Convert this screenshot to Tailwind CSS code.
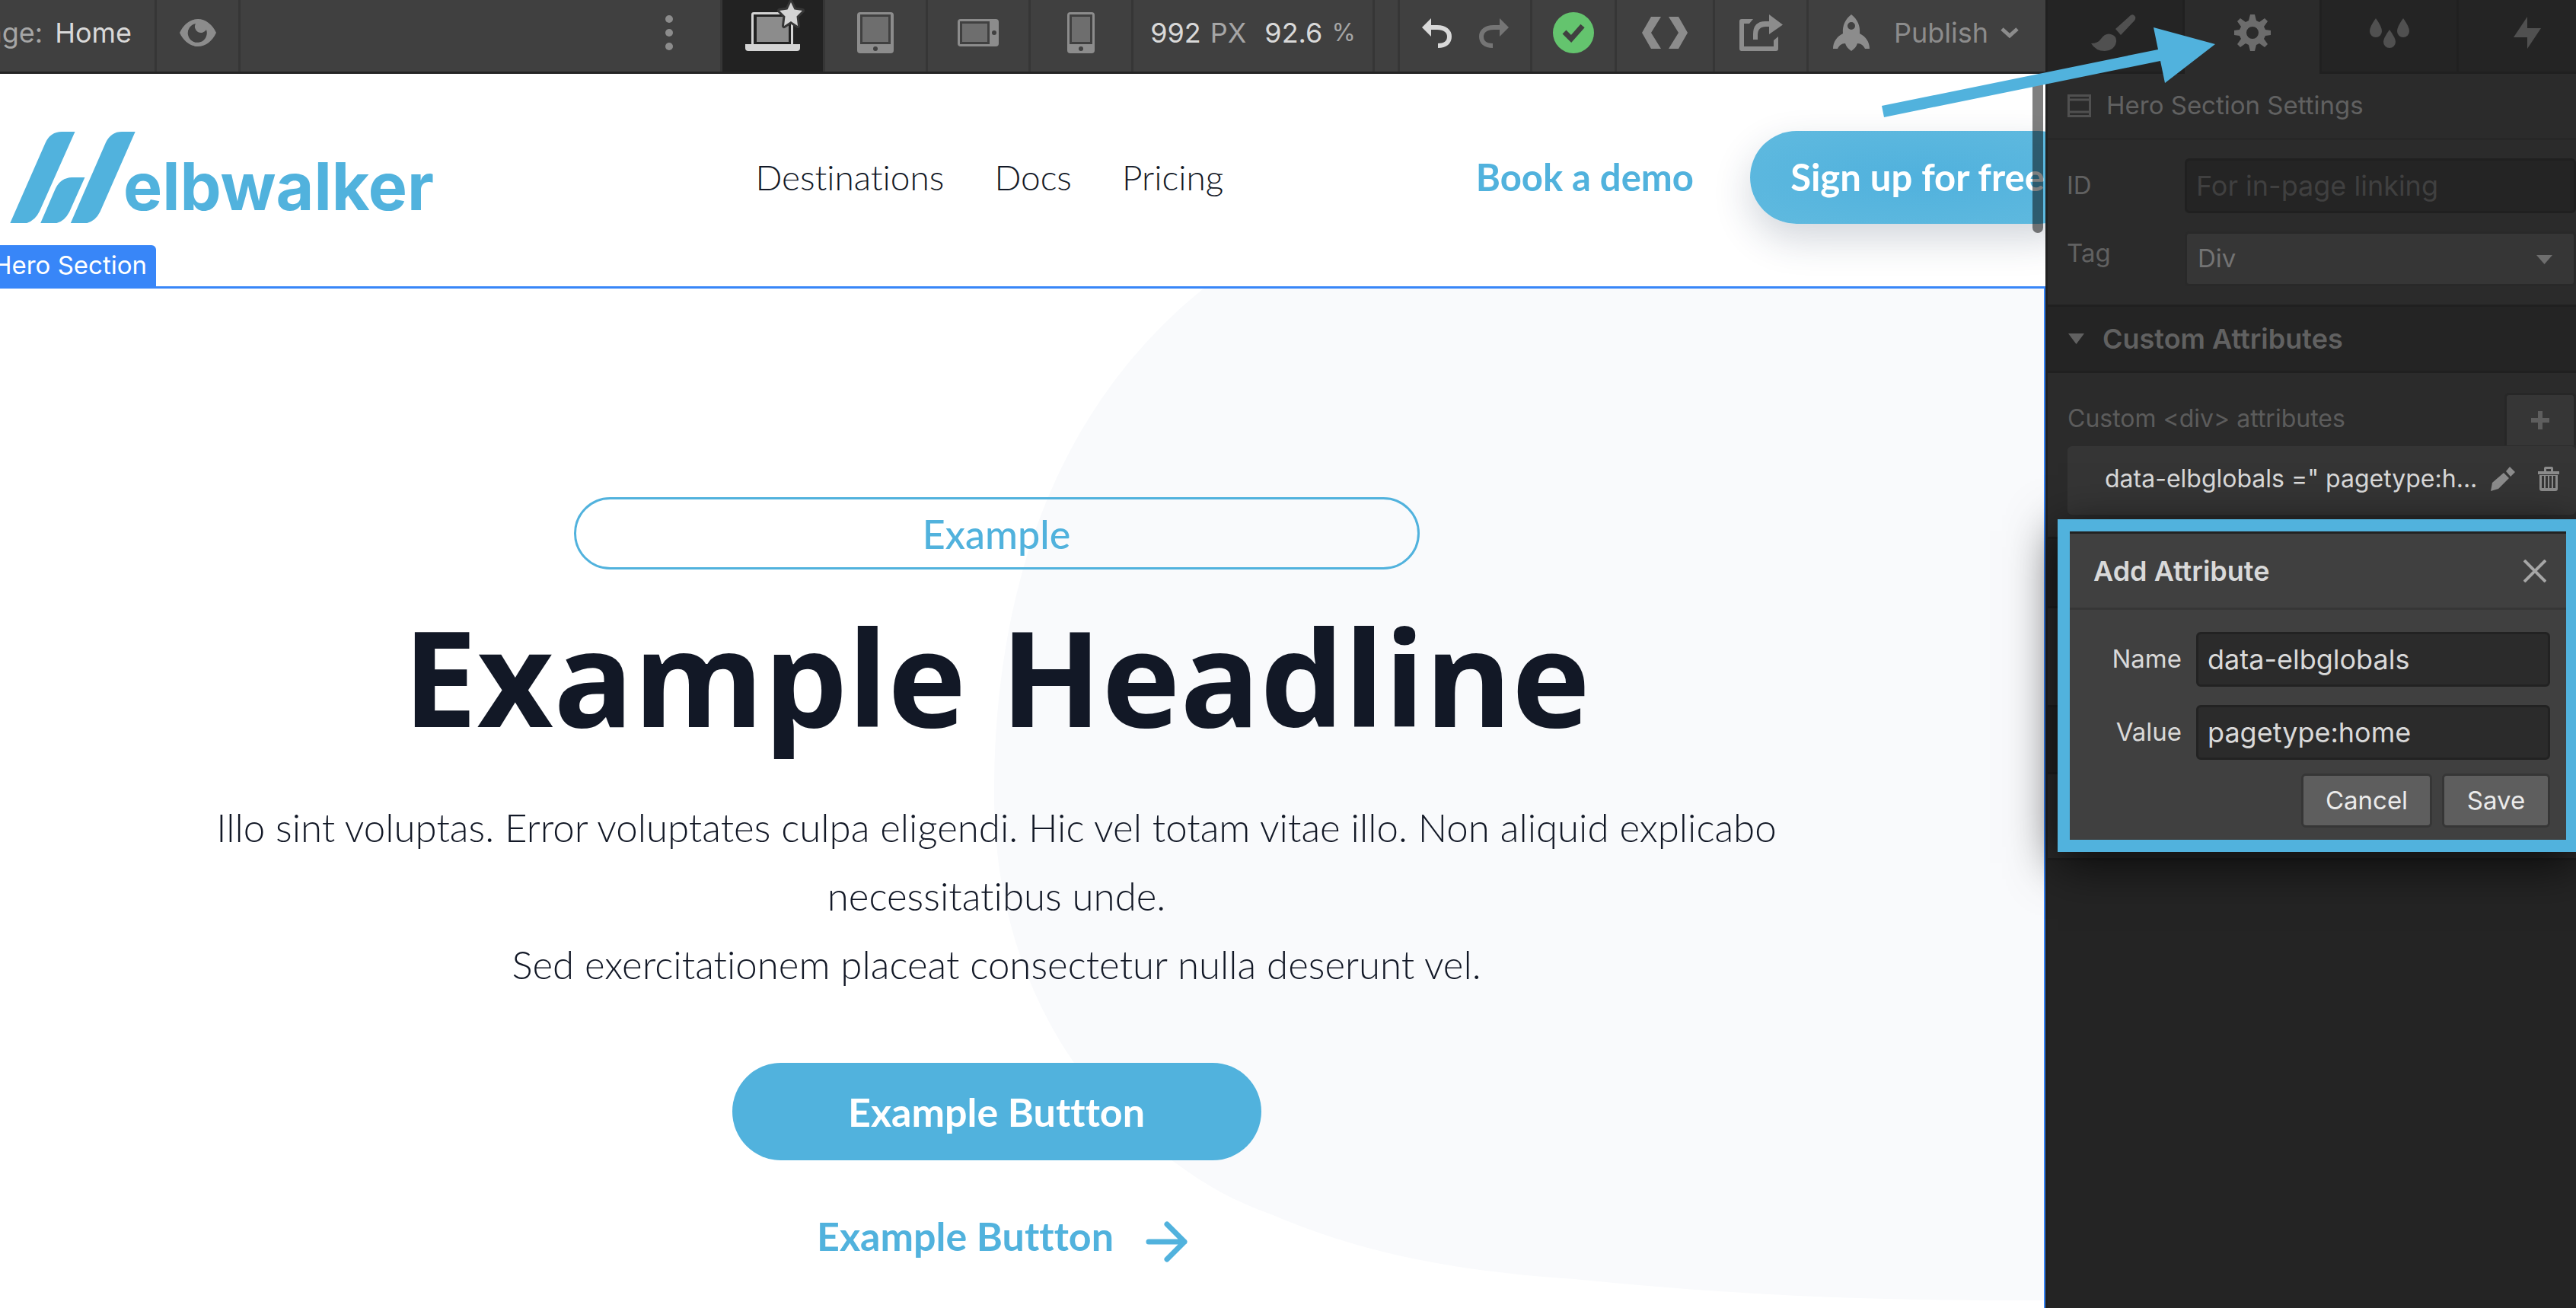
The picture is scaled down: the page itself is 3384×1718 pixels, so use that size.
<!DOCTYPE html>
<html lang="en">
<head>
<meta charset="utf-8">
<title>Page: Home</title>
<script src="https://cdn.jsdelivr.net/npm/@tailwindcss/browser@4"></script>
</head>
<body class="bg-white">
<div class="relative flex h-screen overflow-hidden font-['Inter',sans-serif]">

  <!-- Left: toolbar and canvas -->
  <div class="flex min-w-0 flex-1 flex-col">
    <header class="flex h-[97px] shrink-0 items-stretch overflow-hidden border-b-3 border-[#242424] bg-[#404040] text-[36px] whitespace-nowrap text-[#8c8c8c]">
      <div class="flex w-[206px] shrink-0 items-center justify-end gap-4 border-r-3 border-[#363636] pr-[30px] pb-2">
        <span class="text-[#a6a6a6]">Page:</span><span class="text-[#d9d9d9]">Home</span>
      </div>
      <button aria-label="Preview" class="flex w-[110px] shrink-0 items-center justify-center border-r-3 border-[#363636] pb-2">
        <svg class="h-9 w-12" viewBox="0 0 48 36" fill="currentColor"><path fill-rule="evenodd" d="M0 18C5 7 14 0 24 0s19 7 24 18c-5 11-14 18-24 18S5 29 0 18zM21 6a12.500 12.500 0 1 0 14 8a7 7 0 1 1-14-8z"/></svg>
      </button>
      <div class="flex min-w-0 flex-1 items-center justify-end border-r-3 border-[#363636] pr-[62px] pb-2">
        <button aria-label="More"><svg class="h-[46px] w-[10px]" viewBox="0 0 10 46" fill="currentColor"><circle cx="5" cy="5" r="5"/><circle cx="5" cy="23" r="5"/><circle cx="5" cy="41" r="5"/></svg></button>
      </div>
      <button aria-label="Desktop" class="flex w-[135px] shrink-0 items-start border-r-3 border-[#363636] bg-[#222222] pl-[30px]">
        <svg class="h-[70px] w-[78px]" viewBox="0 0 78 70"><rect x="8" y="16" width="55" height="44" rx="3" fill="#d4d4d4"/><rect x="11" y="19" width="49" height="39" fill="#222"/><rect x="15" y="22" width="42" height="33" fill="#8c8c8c"/><path d="M0 58h72v5q0 4-4 4H4q-4 0-4-4z" fill="#d4d4d4"/><path d="M60 3l4.500 9.500 10.500 1.500-7.500 7.500L69 34l-9-6-9 6 1.500-12.500L45 14l10.500-1.500z" fill="#d4d4d4" stroke="#363636" stroke-width="6" stroke-linejoin="round" paint-order="stroke"/></svg>
      </button>
      <button aria-label="Tablet" class="flex w-[135px] shrink-0 items-center justify-center border-r-3 border-[#363636] pb-2">
        <svg class="h-[54px] w-12" viewBox="0 0 48 54"><rect width="48" height="54" rx="4" fill="#8c8c8c"/><rect x="4" y="3" width="40" height="39" fill="#404040"/><rect x="7" y="6" width="34" height="33" fill="#6e6e6e"/><circle cx="24" cy="48" r="3" fill="#404040"/></svg>
      </button>
      <button aria-label="Mobile landscape" class="flex w-[135px] shrink-0 items-center justify-center border-r-3 border-[#363636] pb-2">
        <svg class="h-9 w-[54px]" viewBox="0 0 54 36"><rect width="54" height="36" rx="4" fill="#8c8c8c"/><rect x="3" y="3" width="39" height="30" fill="#404040"/><rect x="6" y="6" width="33" height="24" fill="#6e6e6e"/><circle cx="48" cy="18" r="3" fill="#404040"/></svg>
      </button>
      <button aria-label="Mobile portrait" class="flex w-[135px] shrink-0 items-center justify-center border-r-3 border-[#363636] pb-2">
        <svg class="h-[54px] w-9" viewBox="0 0 36 54"><rect width="36" height="54" rx="4" fill="#8c8c8c"/><rect x="3" y="3" width="30" height="39" fill="#404040"/><rect x="6" y="6" width="24" height="33" fill="#6e6e6e"/><circle cx="18" cy="48" r="3" fill="#404040"/></svg>
      </button>
      <div class="flex w-[317px] shrink-0 items-center justify-center border-r-3 border-[#363636] pb-2">
        <span class="mr-3 text-[#d9d9d9]">992</span><span class="mr-6 text-[#a6a6a6]">PX</span><span class="mr-3 text-[#d9d9d9]">92.6</span><span class="text-[32px] text-[#a6a6a6]">%</span>
      </div>
      <div class="w-[33px] shrink-0 border-r-3 border-[#363636]"></div>
      <div class="flex w-[174px] shrink-0 items-center justify-center gap-9 border-r-3 border-[#363636] pb-2">
        <button aria-label="Undo" class="text-[#d9d9d9]"><svg class="h-[39px] w-[39px]" viewBox="0 0 39 39"><path d="M0 12L12 0v24z" fill="currentColor"/><path d="M8 12h12c10 0 16 5 16 12s-5 12-15 12" fill="none" stroke="currentColor" stroke-width="6"/></svg></button>
        <button aria-label="Redo" class="text-[#757575]"><svg class="h-[39px] w-[39px]" viewBox="0 0 39 39"><path d="M39 12L27 0v24z" fill="currentColor"/><path d="M31 12H19C9 12 3 17 3 24s5 12 15 12" fill="none" stroke="currentColor" stroke-width="6"/></svg></button>
      </div>
      <button aria-label="Saved" class="flex w-[111px] shrink-0 items-center justify-center border-r-3 border-[#363636] pb-2">
        <svg class="h-[54px] w-[54px]" viewBox="0 0 54 54"><circle cx="27" cy="27" r="27" fill="#64c46e"/><path d="M15 26l9 9 15-17" fill="none" stroke="#404040" stroke-width="7"/></svg>
      </button>
      <button aria-label="Export code" class="flex w-[129px] shrink-0 items-center justify-center border-r-3 border-[#363636] pb-2">
        <svg class="h-[42px] w-[60px]" viewBox="0 0 60 42" fill="currentColor"><path d="M12 0h13L12 21l13 21H12L0 21zM48 0H35l13 21-13 21h13l12-21z"/></svg>
      </button>
      <button aria-label="Share" class="flex w-[123px] shrink-0 items-center justify-center border-r-3 border-[#363636] pb-2">
        <svg class="h-12 w-[57px]" viewBox="0 0 57 48" fill="currentColor"><path d="M39 0l18 13.500L39 26V16h-4q-11 0-11 11v6h-6v-7Q18 9 34 9h5z"/><path d="M3 6h15l-5 6H6v30h39v-8l6-5v16q0 3-3 3H3q-3 0-3-3V9q0-3 3-3z"/></svg>
      </button>
      <button class="flex w-[311px] shrink-0 items-center pb-2 pl-[32px]">
        <svg class="h-12 w-12" viewBox="0 0 48 48" fill="currentColor"><path fill-rule="evenodd" d="M24 0c8 6 12 15 11 25 8 4 13 11 13 20h-6c-2-4-5-7-10-7-1 4-4 7-8 10-4-3-7-6-8-10-5 0-8 3-10 7H0c0-9 5-16 13-20C12 15 16 6 24 0zm0 10a5 5 0 1 0 0 10a5 5 0 0 0 0-10z"/></svg>
        <span class="ml-8">Publish</span>
        <svg class="ml-4 h-4 w-6" viewBox="0 0 24 16" fill="none" stroke="currentColor" stroke-width="5"><path d="M2 3l10 9 10-9"/></svg>
      </button>
    </header>

    <!-- Page canvas -->
    <main class="relative flex min-h-0 flex-1 flex-col overflow-hidden bg-white font-['Lato',sans-serif] text-[#121826] [font-variant-ligatures:none]">
      <div class="relative flex h-[279px] shrink-0 items-center pb-2 whitespace-nowrap">
        <a href="#" class="ml-[13px] flex h-[120px] items-end font-['Inter',sans-serif] text-[86px] leading-[96px] font-bold text-[#51b2dd]">
          <svg class="h-[120px] w-[165px]" viewBox="40 66 496 360" fill="currentColor"><path d="M41 426L180 110Q200 66 245 66H297L157 380Q140 416 107 426ZM161 426L220 290Q240 248 285 246H336L275 382Q255 420 225 426ZM280 426L419 108Q440 66 482 66H535L396 382Q378 418 345 426Z"/></svg>
          <span class="-ml-4">elbwalker</span>
        </a>
        <div class="grow-[418]"></div>
        <nav class="flex gap-[66px] text-[46px] font-light">
          <a href="#">Destinations</a><a href="#">Docs</a><a href="#">Pricing</a>
        </nav>
        <div class="grow-[328]"></div>
        <a href="#" class="text-[49px] font-bold text-[#51b2dd]">Book a demo</a>
        <a href="#" class="-mr-[52px] ml-[74px] flex h-[122px] w-[440px] items-center justify-center rounded-full bg-radial from-[#50b1dd] to-[#60badf] text-[49px] font-bold text-white shadow-[0_20px_50px_rgba(30,50,80,0.2)]">Sign up for free</a>
        <span class="absolute bottom-0 left-0 flex h-[54px] w-[205px] items-center justify-end rounded-tr-md bg-[#3886f8] pr-[12px] font-['Inter',sans-serif] text-[33px] text-white">Hero Section</span>
      </div>

      <section class="relative flex flex-1 flex-col items-center overflow-hidden border-t-3 border-r-2 border-[#3886f8] pr-[67px] text-center">
        <svg class="absolute top-0 right-0 h-[1339px] w-[1381px]" viewBox="0 0 1381 1339"><path d="M277 0C85 155 2 390 2 664C2 800 40 920 107 1017C150 1075 190 1115 241 1149C280 1178 320 1200 366 1216C480 1265 600 1290 764 1301C1000 1325 1200 1330 1381 1329V0Z" fill="#f9fafc"/></svg>
        <div class="relative mt-[274px] flex h-[95px] w-[1111px] items-center justify-center rounded-full border-3 border-[#51b2dd] text-[52px] font-medium text-[#51b2dd]">Example</div>
        <h1 class="relative mt-[40px] font-['Open_Sans',sans-serif] text-[174px] leading-[200px] font-bold whitespace-nowrap">Example Headline</h1>
        <p class="relative mt-[54px] w-[2120px] text-[51px] leading-[90px] font-light">Illo sint voluptas. Error voluptates culpa eligendi. Hic vel totam vitae illo. Non aliquid explicabo necessitatibus unde.<br>Sed exercitationem placeat consectetur nulla deserunt vel.</p>
        <button class="relative mt-[84px] h-[128px] w-[695px] shrink-0 rounded-full bg-[#51b2dd] text-[52px] font-bold text-white">Example Buttton</button>
        <a href="#" class="relative mt-[64px] flex items-center gap-[42px] pl-4 text-[52px] leading-[60px] font-bold whitespace-nowrap text-[#51b2dd]">Example Buttton
          <svg class="mt-4 h-[54px] w-[56px]" viewBox="0 0 56 54" fill="none" stroke="currentColor" stroke-width="7" stroke-linecap="round" stroke-linejoin="round"><path d="M4 27h47M28 4l23 23-23 23"/></svg>
        </a>
      </section>
      <div class="absolute top-2 right-[3px] h-[201px] w-[14px] rounded-full bg-black/50"></div>
    </main>
  </div>

  <!-- Right: settings panel -->
  <aside class="relative flex w-[697px] shrink-0 flex-col border-l-3 border-[#202020] bg-[#242424] text-[33px] whitespace-nowrap text-[#616161]">
    <div class="flex h-[97px] shrink-0 overflow-hidden text-[#505050]">
      <button aria-label="Style" class="flex w-[180px] shrink-0 items-center justify-center border-r-3 border-b-3 border-[#202020] pb-2">
        <svg class="mr-1 h-12 w-[59px]" viewBox="0 0 59 48" fill="currentColor"><path d="M52 1q4-2 6 2 1 2-1 5L39 27l-7-8zM0 38q9 0 13-6 6-8 13-6 8 2 7 10-2 11-15 12Q6 48 0 38z"/></svg>
      </button>
      <button aria-label="Settings" class="flex w-[177px] shrink-0 items-center justify-center bg-[#2b2b2b] pb-[11px] text-[#6c6c6c]">
        <svg class="h-12 w-12" viewBox="-24 -24 48 48" fill="currentColor"><path fill-rule="evenodd" d="M-3-24h6l2 8 4 2 7-5 4 4-5 7 2 4 7 1v6l-7 1-2 4 5 7-4 4-7-5-4 2-2 8h-6l-2-8-4-2-7 5-4-4 5-7-2-4-7-1v-6l7-1 2-4-5-7 4-4 7 5 4-2zM0-8a8 8 0 1 0 0 16A8 8 0 0 0 0-8z"/></svg>
      </button>
      <button aria-label="Interactions" class="flex w-[183px] shrink-0 items-center justify-center border-x-3 border-b-3 border-[#202020] pb-2">
        <svg class="h-[39px] w-[52px]" viewBox="0 0 52 39" fill="currentColor"><path d="M8 0q8 11 8 17a8 8 0 0 1-16 0Q0 11 8 0zM44 0q8 11 8 17a8 8 0 0 1-16 0q0-6 8-17zM26 15q8 11 8 16a8 8 0 0 1-16 0q0-5 8-16z"/></svg>
      </button>
      <button aria-label="Effects" class="flex w-[180px] shrink-0 items-center justify-center border-b-3 border-[#202020] pb-2">
        <svg class="h-[42px] w-9" viewBox="0 0 36 42" fill="currentColor"><path d="M18 0v15h18L18 42V27H0z"/></svg>
      </button>
    </div>

    <div class="flex h-[87px] shrink-0 items-center gap-[20px] border-b-3 border-[#272727] bg-[#2b2b2b] pl-[26px]">
      <svg class="h-[30px] w-[31px]" viewBox="0 0 31 30" fill="none" stroke="#505050" stroke-width="3"><path d="M1.500 1.500h28v27h-28zM1 7h29M1 23h29"/></svg>
      <h2>Hero Section Settings</h2>
    </div>

    <div class="flex h-[216px] shrink-0 flex-col bg-[#2b2b2b] pt-[24px] pl-[25px]">
      <div class="flex h-[72px] items-center">
        <label for="eid" class="w-[155px]">ID</label>
        <input id="eid" placeholder="For in-page linking" class="h-[72px] min-w-0 flex-1 rounded-md border-3 border-[#202020] bg-[#242424] px-[12px] text-[36px] placeholder:text-[#404040]">
      </div>
      <div class="mt-[24px] flex h-[72px]">
        <label for="tag" class="w-[155px] pt-1">Tag</label>
        <div class="relative flex-1">
          <select id="tag" class="h-full w-full appearance-none rounded-md border-3 border-[#292929] bg-[#363636] px-[14px] text-[#737373]"><option>Div</option></select>
          <svg class="absolute top-[31px] right-[31px] h-3 w-[21px]" viewBox="0 0 21 12" fill="#6e6e6e"><path d="M0 0h21L10.500 12z"/></svg>
        </div>
      </div>
    </div>

    <div class="flex h-[90px] shrink-0 items-center gap-[24px] border-y-3 border-[#202020] pl-[27px] text-[36px] font-semibold">
      <svg class="h-[14px] w-[21px]" viewBox="0 0 21 14" fill="#616161"><path d="M0 0h21L10.500 14z"/></svg>
      <h3>Custom Attributes</h3>
    </div>

    <div class="h-[218px] shrink-0 border-b-3 border-[#202020] bg-[#2b2b2b] pt-[24px] pl-[26px] text-[32px]">
      <div class="flex h-[72px] items-center justify-between">
        <span class="text-[#5c5c5c]">Custom &lt;div&gt; attributes</span>
        <button aria-label="Add attribute" class="flex h-[69px] w-[94px] items-center justify-center rounded-t-md border-3 border-b-0 border-[#272727] bg-[#363636]"><svg class="h-6 w-6" viewBox="0 0 24 24" stroke="#5e5e5e" stroke-width="6"><path d="M12 0v24M0 12h24"/></svg></button>
      </div>
      <div class="flex h-[90px] items-center rounded-md bg-[#353535] pb-1 pl-[49px] text-[#d9d9d9]">
        <span>data-elbglobals =" pagetype:h...</span>
        <button aria-label="Edit" class="mr-[30px] ml-auto"><svg class="h-[32px] w-[32px]" viewBox="0 0 32 32" fill="#8c8c8c"><path d="M0 32l2-11L17 8l7 7L10 29zM20 6l5-6 7 7-6 6z"/></svg></button>
        <button aria-label="Delete" class="mr-[22px]"><svg class="h-[32px] w-[28px]" viewBox="0 0 28 32" fill="#8c8c8c"><path fill-rule="evenodd" d="M0 6h8V2q0-2 2-2h8q2 0 2 2v4h8v4H0zM11 6h6V3h-6zM2 11h24v18q0 3-3 3H5q-3 0-3-3zM5 12v16h3V12zM10 12v16h3V12zM15 12v16h3V12zM20 12v16h3V12z"/></svg></button>
      </div>
    </div>
    <div class="h-[91px] shrink-0 border-b-3 border-[#202020]"></div>
    <div class="h-[127px] shrink-0 bg-[#2b2b2b]"></div>
    <div class="h-[91px] shrink-0 border-y-3 border-[#202020]"></div>
    <div class="h-[113px] shrink-0 border-b-3 border-[#202020] bg-[#2b2b2b]"></div>

    <!-- Add attribute dialog -->
    <form class="absolute top-[682px] -right-[3px] w-[684px] border-[16px] border-[#51b2dd] bg-[#404040] text-[#d9d9d9] shadow-[0_15px_60px_rgba(0,0,0,0.75)]">
      <div class="flex h-[103px] items-center justify-between border-t-3 border-b-3 border-t-[#222222] border-b-[#363636] pr-[26px] pl-[31px]">
        <h3 class="text-[36px] font-semibold">Add Attribute</h3>
        <button type="button" aria-label="Close"><svg class="h-[30px] w-[30px]" viewBox="0 0 30 30" stroke="#a6a6a6" stroke-width="4"><path d="M1 1l28 28M29 1L1 29"/></svg></button>
      </div>
      <div class="flex flex-col gap-[24px] pt-[29px] pr-[21px]">
        <div class="flex items-center justify-end gap-[19px]"><label for="an">Name</label><input id="an" value="data-elbglobals" class="h-[72px] w-[465px] rounded-md border-3 border-[#222222] bg-[#2b2b2b] px-[12px] text-[36px]"></div>
        <div class="flex items-center justify-end gap-[19px]"><label for="av">Value</label><input id="av" value="pagetype:home" class="h-[72px] w-[465px] rounded-md border-3 border-[#222222] bg-[#2b2b2b] px-[12px] text-[36px]"></div>
      </div>
      <div class="flex justify-end gap-[13px] pt-[18px] pr-[21px] pb-[16px] text-[#ebebeb]">
        <button type="button" class="h-[71px] w-[172px] rounded-md border-3 border-[#363636] bg-[#5e5e5e]">Cancel</button>
        <button type="button" class="h-[71px] w-[142px] rounded-md border-3 border-[#363636] bg-[#5e5e5e]">Save</button>
      </div>
    </form>
  </aside>

  <!-- Arrow pointing at the settings tab -->
  <svg class="pointer-events-none absolute top-9 right-[474px] h-[118px] w-[438px]" viewBox="0 0 438 118" fill="#51b2dd"><path d="M0 103L363 29L357 0L438 22L372 73L366 44L3 118Z"/></svg>
</div>
</body>
</html>
